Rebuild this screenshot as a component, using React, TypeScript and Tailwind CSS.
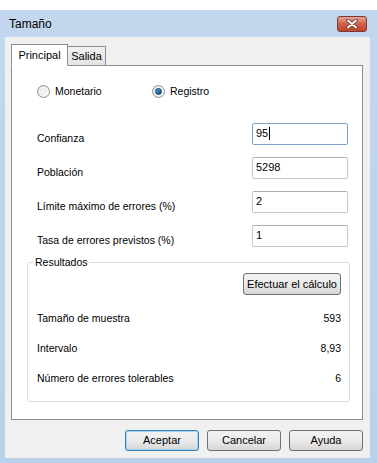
import React from "react";

const Field = ({ label, value, focused }: { label: string; value: string; focused?: boolean }) => (
  <div className="flex items-center h-[22px] mb-[12px]">
    <span className="flex-1 pt-[9px]">{label}</span>
    <div
      className={`w-[96px] h-[22px] bg-white border rounded-[2px] px-[3px] flex items-center ${
        focused ? "border-[#7da2ce]" : "border-[#c5c8cf] border-t-[#abadb3]"
      }`}
    >
      <span className="text-[11px] leading-none -mt-[2px]">{value}</span>
      {focused && <span className="w-px h-[13px] bg-black ml-px -mt-[2px]" />}
    </div>
  </div>
);

const Btn = ({ children, primary }: { children: React.ReactNode; primary?: boolean }) => (
  <button
    className={`w-[74px] h-[21px] rounded-[3px] border text-[11px] bg-gradient-to-b from-[#f2f2f2] via-[#ebebeb] to-[#d6d6d6] ${
      primary ? "border-[#3c7fb1] shadow-[inset_0_0_0_1px_#9fd5f5]" : "border-[#707070]"
    }`}
  >
    {children}
  </button>
);

const Radio = ({ checked }: { checked?: boolean }) => (
  <span className="w-[13px] h-[13px] rounded-full border border-[#8e8f8f] bg-gradient-to-br from-[#e6e6e6] to-[#fbfbfb] flex items-center justify-center">
    {checked && (
      <span className="w-[7px] h-[7px] rounded-full bg-gradient-to-br from-[#4fa3e6] to-[#0d4a7e] border border-[#15426b]" />
    )}
  </span>
);

const ResultRow = ({ label, value }: { label: string; value: string }) => (
  <div className="flex justify-between h-[30px] items-center">
    <span>{label}</span>
    <span>{value}</span>
  </div>
);

export default function App() {
  return (
    <div
      className="w-[377px] h-[463px] bg-white pt-[10px] text-[10.5px] text-black"
      style={{ fontFamily: '"Liberation Sans", Arial, sans-serif' }}
    >
      <div className="h-[453px] bg-gradient-to-b from-[#c3d7ee] to-[#b9d1ea] flex flex-col pl-[5px] pr-[7px] pb-[5px]">
        {/* Title bar */}
        <div className="h-[27px] flex items-center justify-between pl-[4px] pr-[2px]">
          <span className="text-[12px]">Tamaño</span>
          <div className="w-[30px] h-[16px] mr-px rounded-[3px] border border-[#7a3a32] bg-gradient-to-b from-[#e8a493] via-[#cf5f4b] to-[#c2412c] flex items-center justify-center">
            <svg width="12" height="10" viewBox="0 0 12 10">
              <path d="M2 1.5 L10 8.5 M10 1.5 L2 8.5" stroke="#5a2a22" strokeWidth="3.6" strokeLinecap="round" />
              <path d="M2 1.5 L10 8.5 M10 1.5 L2 8.5" stroke="#ffffff" strokeWidth="2" strokeLinecap="round" />
            </svg>
          </div>
        </div>

        {/* Client area */}
        <div className="flex-1 bg-[#f0f0f0] pt-[7px] pl-[6px] pr-[7px] flex flex-col">
          {/* Tabs */}
          <div className="flex items-end h-[21px] relative z-10">
            <div className="w-[57px] h-[22px] bg-white border border-[#898c95] border-b-white flex items-center justify-center text-[11px] -mb-px">
              Principal
            </div>
            <div className="w-[38px] h-[19px] bg-gradient-to-b from-[#f2f2f2] to-[#e3e3e3] border border-[#898c95] border-l-0 border-b-0 flex items-center justify-center text-[11px]">
              Salida
            </div>
          </div>

          {/* Panel */}
          <div className="h-[355px] bg-white border border-[#898c95] pl-[25px] pr-[14px]">
            <div className="flex items-center h-[13px] mt-[19px]">
              <div className="flex items-center gap-[5px] w-[115px]">
                <Radio />
                <span>Monetario</span>
              </div>
              <div className="flex items-center gap-[5px]">
                <Radio checked />
                <span>Registro</span>
              </div>
            </div>

            <div className="mt-[25px]">
              <Field label="Confianza" value="95" focused />
              <Field label="Población" value="5298" />
              <Field label="Límite máximo de errores (%)" value="2" />
              <Field label="Tasa de errores previstos (%)" value="1" />
            </div>

            {/* Resultados group */}
            <div className="relative -ml-[10px] mr-[-2px] mt-[15px] h-[140px] border border-[#d5dfe5] rounded-[3px] pl-[9px] pr-[8px]">
              <span className="absolute -top-[7px] left-[6px] bg-white px-[1px] leading-[13px]">Resultados</span>
              <div className="flex justify-end mt-[10px]">
                <button className="h-[22px] px-[3px] rounded-[3px] border border-[#707070] bg-gradient-to-b from-[#f2f2f2] via-[#ebebeb] to-[#d6d6d6] text-[11px]">
                  Efectuar el cálculo
                </button>
              </div>
              <div className="mt-[9px]">
                <ResultRow label="Tamaño de muestra" value="593" />
                <ResultRow label="Intervalo" value="8,93" />
                <ResultRow label="Número de errores tolerables" value="6" />
              </div>
            </div>
          </div>

          {/* Buttons */}
          <div className="flex justify-end gap-[8px] mt-[10px]">
            <Btn primary>Aceptar</Btn>
            <Btn>Cancelar</Btn>
            <Btn>Ayuda</Btn>
          </div>
        </div>
      </div>
    </div>
  );
}
